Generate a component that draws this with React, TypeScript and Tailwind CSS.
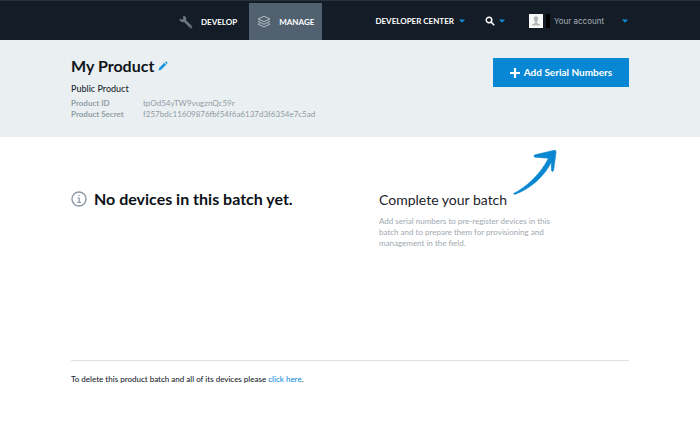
import React from "react";

function Caret() {
  return (
    <svg viewBox="0 0 6 4" className="h-[4px] w-[6px] shrink-0 fill-[#0d8fdc]" aria-hidden="true">
      <path d="M0 .4h6L3 3.8z" />
    </svg>
  );
}

function WrenchIcon() {
  return (
    <svg viewBox="0 0 14 14" className="size-[14px] shrink-0" aria-hidden="true">
      <path d="M5.8 5.8 12 12" stroke="#6b7883" strokeWidth="2.6" strokeLinecap="round" />
      <path
        d="M4 .8 4.4 3.6 3 4.7.7 3.6C.3 5.4 1.4 7.3 3.6 7.3c2 0 3.7-1.3 3.7-3.5C7.3 2 5.9.6 4 .8z"
        fill="#6b7883"
      />
      <circle cx="11.8" cy="11.8" r=".6" fill="#141d27" />
    </svg>
  );
}

function LayersIcon() {
  return (
    <svg viewBox="0 0 14 14" className="size-[14px] shrink-0" fill="none" stroke="#b4c0c8" strokeWidth="1" strokeLinejoin="round" aria-hidden="true">
      <path d="M7 1.3 12.8 4 7 6.7 1.2 4z" />
      <path d="M2.6 5.9 1.2 6.6 7 9.3l5.8-2.7-1.4-.7" />
      <path d="M2.6 8.5 1.2 9.2 7 11.9l5.8-2.7-1.4-.7" />
    </svg>
  );
}

function SearchIcon() {
  return (
    <svg viewBox="0 0 10 10" className="size-[10px] shrink-0" fill="none" stroke="#fff" aria-hidden="true">
      <circle cx="4" cy="4" r="2.8" strokeWidth="1.4" />
      <path d="m6.2 6.2 2.6 2.6" strokeWidth="1.6" strokeLinecap="round" />
    </svg>
  );
}

function Avatar() {
  return (
    <svg viewBox="0 0 14 14" className="size-[14px] shrink-0" aria-hidden="true">
      <path d="M0 0h14v14H0z" fill="#f8f9f9" />
      <path d="M7 2.2c-1.6 0-2.3 1.2-2.2 2.8.1 1.2.5 2 1.2 2.6v1.3c-.5.6-3.2.8-3.6 2.7h9.2c-.4-1.9-3.1-2.1-3.6-2.7V7.6c.7-.6 1.100-1.4 1.200-2.6.1-1.600-.6-2.800-2.200-2.800z" fill="#b3b5b6" />
    </svg>
  );
}

function Header() {
  return (
    <header className="h-10 border-t border-[#27323d] bg-[#141d27] text-[8px] text-white">
      <div className="mx-auto flex h-full w-full max-w-[558px] justify-between">
        <nav className="ml-[100px] flex pt-[2px] font-bold">
          <a href="#develop" className="flex items-center gap-2 px-2">
            <WrenchIcon />
            DEVELOP
          </a>
          <a href="#manage" className="ml-1 flex items-center gap-2 bg-[#51616f] px-2">
            <LayersIcon />
            MANAGE
          </a>
        </nav>
        <div className="mr-[1px] flex items-center">
          <button type="button" className="flex items-center gap-[5px] font-bold">
            DEVELOPER CENTER
            <Caret />
          </button>
          <button type="button" aria-label="Search" className="ml-5 flex items-center gap-1">
            <SearchIcon />
            <Caret />
          </button>
          <button type="button" className="ml-6 flex items-center text-[#aab2b9]">
            <Avatar />
            <span className="ml-[3px] mr-1 h-[14px] w-1 bg-black" />
            <span className="mr-[18px] font-['Inter',sans-serif]">Your account</span>
            <Caret />
          </button>
        </div>
      </div>
    </header>
  );
}

function ProductBanner() {
  return (
    <section className="bg-[#eaf0f1]">
      <div className="mx-auto flex h-[97px] w-full max-w-[558px] items-start justify-between">
        <div className="pt-4">
          <div className="flex items-center gap-1">
            <h1 className="text-[16px] leading-5 font-bold text-[#10151b]">My Product</h1>
            <button type="button" aria-label="Rename product">
              <svg viewBox="0 0 10 10" className="size-[10px] fill-[#1a94db]" aria-hidden="true">
                <path d="M.6 9.4 1.3 6.8 6.3 1.8 8.2 3.7 3.2 8.7zM6.900 1.2 7.6.6Q8.1.2 8.6.7L9.3 1.4Q9.8 1.9 9.4 2.4L8.8 3.1z" />
              </svg>
            </button>
          </div>
          <p className="mt-[7px] text-[9px] leading-3 font-medium text-[#222a32]">Public Product</p>
          <dl className="mt-[3px] grid grid-cols-[72px_auto] text-[8px] leading-[11px] text-[#919ca6]">
            <dt className="font-bold">Product ID</dt>
            <dd>tpOd54yTW9vugznQc59r</dd>
            <dt className="font-bold">Product Secret</dt>
            <dd>f257bdc11609876fbf54f6a6137d3f6354e7c5ad</dd>
          </dl>
        </div>
        <button type="button" className="mt-[18px] flex h-[29px] w-[136px] items-center justify-center gap-1 bg-[#0787d4] text-[10px] font-bold text-white">
          <svg viewBox="0 0 10 10" className="size-[10px]" stroke="#fff" strokeWidth="2.2" aria-hidden="true">
            <path d="M5 0v10M0 5h10" />
          </svg>
          Add Serial Numbers
        </button>
      </div>
    </section>
  );
}

function EmptyBatch() {
  return (
    <section className="grid grid-cols-[308px_1fr] pt-3">
      <div className="flex items-center gap-[7px] self-start pt-10">
        <svg viewBox="0 0 16 16" className="size-4 shrink-0" fill="none" stroke="#8d99a4" aria-hidden="true">
          <circle cx="8" cy="8" r="7" strokeWidth="1.4" />
          <path d="M6.3 7h1.9v4.2M6.2 11.4h3.8M7.3 4.5h1.6" strokeWidth="1.2" />
        </svg>
        <h2 className="text-[16px] leading-5 font-bold whitespace-nowrap text-[#0c1117]">No devices in this batch yet.</h2>
      </div>
      <div>
        <div className="flex items-end gap-[6px]">
          <h2 className="text-[14px] leading-5 whitespace-nowrap text-[#1b232b]">Complete your batch</h2>
          <svg viewBox="0 0 44 46" className="mb-[15px] h-[46px] w-[44px]" aria-hidden="true">
            <path d="M.6 44.6C13 38 27 26 35.5 9.2L22 8.2Q19.600 7.200 22 5.800L41.500 1.200Q43.400 1.200 43 3.500L40.600 21.500Q39.600 23.500 38.400 21.500L38.200 13.200C31 28 17 40 1.400 45.600z" fill="#0b87d1" stroke="#0b87d1" strokeWidth=".6" strokeLinejoin="round" />
          </svg>
        </div>
        <p className="mt-[6px] max-w-[190px] text-[8px] leading-[11px] text-[#a0a9b1]">
          Add serial numbers to pre-register devices in this batch and to prepare them for provisioning and management in the field.
        </p>
      </div>
    </section>
  );
}

export default function App() {
  return (
    <div className="min-h-screen bg-white font-['Lato',sans-serif]">
      <Header />
      <ProductBanner />
      <main className="mx-auto w-full max-w-[558px]">
        <EmptyBatch />
        <footer className="mt-[111px] border-t border-[#dfe2e4] pt-3 text-[8px] leading-3 font-medium text-[#20272e]">
          To delete this product batch and all of its devices please{" "}
          <a href="#delete" className="text-[#1690dc]">click here</a>.
        </footer>
      </main>
    </div>
  );
}
